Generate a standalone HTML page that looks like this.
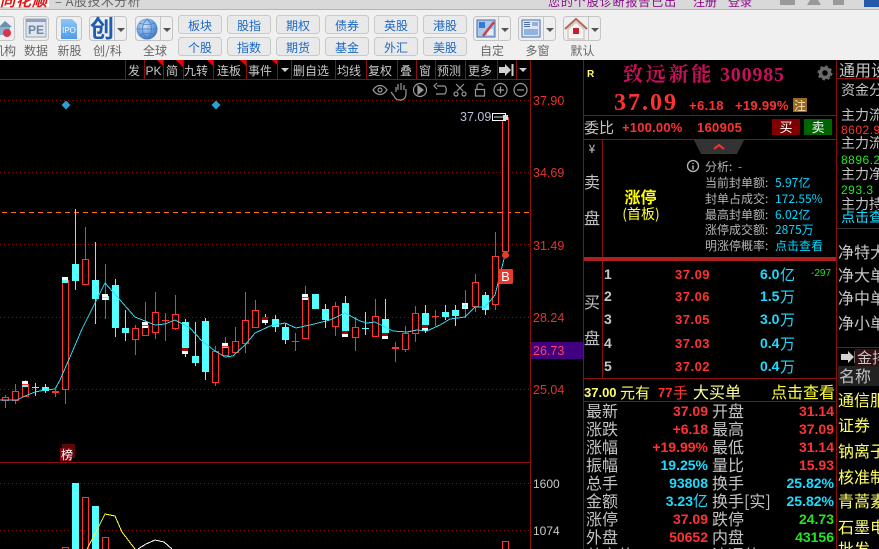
<!DOCTYPE html>
<html><head><meta charset="utf-8"><title>A股技术分析</title>
<style>
html,body{margin:0;padding:0;background:#000;overflow:hidden;width:879px;height:549px}
svg{display:block;position:absolute;left:0;top:0}
text{font-family:"WenQuanYi Zen Hei","Noto Sans CJK SC",sans-serif;font-size:14px}
.l{font-family:"Liberation Sans","WenQuanYi Zen Hei",sans-serif}
.b{font-family:"Liberation Sans","WenQuanYi Zen Hei",sans-serif;font-weight:bold;font-size:14px}
.e{text-anchor:end}.m{text-anchor:middle}
.t text{fill:#c8c8c8;font-size:12px;text-anchor:middle}
.btn rect{fill:#e9e9e9;stroke:#c9c9c9}
.btn text{fill:#1a68c4;font-size:12px;text-anchor:middle}
.lab text{fill:#666;font-size:12px;text-anchor:middle}
.ic rect.f{fill:#efefef;stroke:#c4c4c4}
.gl{fill:#c4c4c4;font-size:16px}
.row text{font-size:16px}
.tb .r{fill:#ff3333}.tb .c{fill:#1ddcff}.tb .g{fill:#22e622}
.tb .b{font-size:14px;text-anchor:end}
.y text{fill:#ffff66;font-size:16px}
.w text{fill:#c4c4c4;font-size:15px}
</style></head><body>
<svg width="879" height="549" viewBox="0 0 879 549" xmlns="http://www.w3.org/2000/svg">
<defs>
<radialGradient id="gb" cx=".4" cy=".35" r=".7"><stop offset="0" stop-color="#cfe2f8"/><stop offset=".6" stop-color="#6b9fdc"/><stop offset="1" stop-color="#3a70b8"/></radialGradient>
<linearGradient id="ip" x1="0" y1="0" x2="0" y2="1"><stop offset="0" stop-color="#8fc6f6"/><stop offset="1" stop-color="#4f9bea"/></linearGradient>
</defs>
<!-- title bar -->
<rect width="879" height="9" fill="#d9d9d9"/>
<rect y="9" width="879" height="1" fill="#b4b4b4"/>
<rect y="10" width="879" height="50" fill="#f0f0f0"/>
<rect x="0" y="0" width="49" height="7" fill="#fff"/>
<text x="0" y="6" class="b" style="font-size:15px;font-style:italic;letter-spacing:1px" fill="#e01818">同花顺</text>
<text x="55" y="6" fill="#666" style="font-size:13px;letter-spacing:.4px">– A股技术分析</text>
<text x="548" y="6" fill="#8a0a8a" style="font-size:12px;letter-spacing:.9px">您的个股诊断报告已出</text>
<text x="693" y="6" fill="#8a0a8a" style="font-size:12px">注册</text>
<text x="728" y="6" fill="#8a0a8a" style="font-size:12px">登录</text>
<rect x="780" y="0" width="15" height="5" fill="#999"/>
<path d="M807 5h14l-3-5h-8z" fill="#999"/>
<rect x="833" y="0" width="11" height="5" fill="#999"/>
<rect x="864" y="0" width="15" height="7" fill="#2458a8"/>

<!-- toolbar buttons -->
<g class="btn" shape-rendering="crispEdges">
<rect x="178.500" y="15.500" width="43" height="18" rx="3"/><rect x="178.500" y="37.500" width="43" height="18" rx="3"/>
<rect x="227.500" y="15.500" width="43" height="18" rx="3"/><rect x="227.500" y="37.500" width="43" height="18" rx="3"/>
<rect x="276.500" y="15.500" width="43" height="18" rx="3"/><rect x="276.500" y="37.500" width="43" height="18" rx="3"/>
<rect x="325.500" y="15.500" width="43" height="18" rx="3"/><rect x="325.500" y="37.500" width="43" height="18" rx="3"/>
<rect x="374.500" y="15.500" width="43" height="18" rx="3"/><rect x="374.500" y="37.500" width="43" height="18" rx="3"/>
<rect x="423.500" y="15.500" width="43" height="18" rx="3"/><rect x="423.500" y="37.500" width="43" height="18" rx="3"/>
</g>
<g class="btn">
<text x="200" y="30">板块</text><text x="200" y="52">个股</text>
<text x="249" y="30">股指</text><text x="249" y="52">指数</text>
<text x="298" y="30">期权</text><text x="298" y="52">期货</text>
<text x="347" y="30">债券</text><text x="347" y="52">基金</text>
<text x="396" y="30">英股</text><text x="396" y="52">外汇</text>
<text x="445" y="30">港股</text><text x="445" y="52">美股</text>
</g>
<!-- toolbar icons -->
<g class="ic">
<rect class="f" x="-3.500" y="16.500" width="18" height="24" rx="3"/>
<path d="M-1 27l6-6 7 6z" fill="#6a8fb0"/><rect x="0" y="27" width="10" height="8" fill="#8fb0d0"/><circle cx="7" cy="33" r="4" fill="#d8344a"/>
<rect class="f" x="23.500" y="16.500" width="25" height="24" rx="3"/>
<rect x="26" y="19" width="20" height="18" fill="#dfe5ee" stroke="#9aa6b6"/><rect x="26" y="19" width="20" height="3" fill="#8ea2c0"/>
<text x="36" y="34" class="b m" fill="#6d84a8" style="font-size:12px">PE</text>
<rect class="f" x="56.500" y="16.500" width="25" height="24" rx="3"/>
<path d="M61 19h11l5 5v15H61z" fill="url(#ip)"/>
<text x="69" y="33" class="l m" fill="#fff" style="font-size:8px">IPO</text>
<rect class="f" x="89.500" y="16.500" width="37" height="24" rx="3"/>
<path d="M114.500 17v23" stroke="#c4c4c4"/>
<text x="102" y="37" class="m" fill="#1f5db0" style="font-size:24px;font-weight:bold">创</text>
<path d="M117 28h8l-4 4z" fill="#555"/>
<rect class="f" x="135.500" y="16.500" width="37" height="24" rx="3"/>
<path d="M160.500 17v23" stroke="#c4c4c4"/>
<circle cx="147" cy="29" r="10.500" fill="url(#gb)"/>
<path d="M137 29h20M147 19c-6 6-6 14 0 20M147 19c6 6 6 14 0 20M139 23c5 2 11 2 16 0M139 35c5-2 11-2 16 0" stroke="#4a7fc4" fill="none" stroke-width=".8"/>
<path d="M163 28h8l-4 4z" fill="#555"/>
<rect class="f" x="473.500" y="16.500" width="37" height="24" rx="3"/>
<path d="M498.500 17v23" stroke="#c4c4c4"/>
<rect x="477" y="20" width="18" height="17" fill="#a8c8f0" stroke="#4a6ea8"/>
<rect x="479" y="22" width="6" height="6" fill="#3a78d0"/><rect x="487" y="29" width="6" height="6" fill="#e8eef8"/>
<path d="M483 36l11-14" stroke="#d04040" stroke-width="2.500"/>
<path d="M501 28h8l-4 4z" fill="#555"/>
<rect class="f" x="518.500" y="16.500" width="37" height="24" rx="3"/>
<path d="M543.500 17v23" stroke="#c4c4c4"/>
<rect x="522" y="20" width="18" height="17" fill="#dfe6f2" stroke="#4a6ea8"/>
<rect x="532" y="22" width="6" height="4" fill="#8fb2e0"/><rect x="524" y="29" width="14" height="6" fill="#8fb2e0"/>
<path d="M524 22.500h6M524 24.500h6M524 26.500h6" stroke="#4a6ea8"/>
<path d="M546 28h8l-4 4z" fill="#555"/>
<rect class="f" x="563.500" y="16.500" width="37" height="24" rx="3"/>
<path d="M588.500 17v23" stroke="#c4c4c4"/>
<path d="M565 29l11-10 11 10" fill="none" stroke="#b06a50" stroke-width="2"/>
<path d="M568 29v10h16V29l-8-7z" fill="#f4f4f4" stroke="#c8b8b0"/>
<rect x="573" y="28" width="6" height="6" fill="#c81e28"/>
<path d="M591 28h8l-4 4z" fill="#555"/>
</g>
<g class="lab">
<text x="4" y="55">机构</text><text x="36" y="55">数据</text><text x="69.500" y="55">新股</text><text x="107.500" y="55">创/科</text><text x="155" y="55">全球</text>
<text x="492" y="55">自定</text><text x="537.500" y="55">多窗</text><text x="582.500" y="55">默认</text>
</g>

<!-- tab bar -->
<rect y="60" width="879" height="20" fill="#000"/>
<g stroke="#8c0f0f" shape-rendering="crispEdges">
<path d="M0 79.500H530M125.500 60v19M144.500 60v19M163.500 60v19M183.500 60v19M213.500 60v19M246.500 60v19M277.500 60v19M291.500 60v19M335.500 60v19M366.500 60v19M397.500 60v19M416.500 60v19M435.500 60v19M465.500 60v19M497.500 60v19M516.500 60v19M530.500 60v20"/>
</g>
<g fill="#f00000">
<path d="M157 60h6v6zM176 60h7v7zM207 60h6v6zM240 60h6v6zM272 60h5v5z"/>
</g>
<g class="t">
<text x="134" y="75">发</text><text x="153.500" y="75" class="l" style="font-size:12px">PK</text><text x="172" y="75">简</text><text x="196" y="75">九转</text><text x="229" y="75">连板</text><text x="260" y="75">事件</text>
<text x="311" y="75">删自选</text><text x="349" y="75">均线</text><text x="380" y="75">复权</text><text x="406" y="75">叠</text><text x="425" y="75">窗</text><text x="449" y="75">预测</text><text x="480" y="75">更多</text>
</g>
<path d="M281 68h8l-4 4zM519 68h8l-4 4z" fill="#d0d0d0"/>
<path d="M499 67h6v-3l6 6-6 6v-3h-6zM511.500 64h2v12h-2z" fill="#d0d0d0"/>

<!-- chart grid -->
<g stroke="#8c0f0f" stroke-dasharray="1 3" shape-rendering="crispEdges">
<path d="M0 100.500H530M0 172.500H530M0 244.500H530M0 317.500H530M0 389.500H530M0 483.500H530M0 530.500H530"/>
</g>
<path d="M2 212.500H530" stroke="#ff6a1a" stroke-dasharray="5 4" shape-rendering="crispEdges"/>
<path d="M0 462.500H530" stroke="#8c0f0f" shape-rendering="crispEdges"/>
<path d="M530.500 80V549" stroke="#8c0f0f" shape-rendering="crispEdges"/>

<!-- tool icons -->
<g fill="none" stroke="#9a9a9a" stroke-width="1.200">
<path d="M373 90c4-6 10-6 14 0c-4 6-10 6-14 0z"/><circle cx="380" cy="90" r="2"/>
<path d="M396 92v-5m2 3v-6m3 6v-7m3 7v-5m2 4v5c0 3-2 6-5 6h-2c-3 0-4-2-5-4l-3-4"/>
<circle cx="420" cy="90" r="6.500"/><path d="M418 86l5 4-5 4z" fill="#9a9a9a"/>
<path d="M437 86h7c3 0 3 8 0 8h-8M437 83l-3 3 3 3"/>
<path d="M456 84l7 7M464 84l-7 7"/><circle cx="456" cy="94" r="2"/><circle cx="464" cy="94" r="2"/>
<rect x="475.500" y="89.500" width="9" height="6.500"/><path d="M477 89v-3c0-3 6-3 6 0"/>
<circle cx="500.500" cy="90" r="6.500"/><path d="M497 90h7M500.500 86.500v7"/>
<circle cx="520.500" cy="90" r="6.500"/><path d="M517 90h7"/>
</g>
<path d="M66 100.500l4.500 4.500-4.500 4.500-4.500-4.500zM216 100.500l4.500 4.500-4.500 4.500-4.500-4.500z" fill="#2a9fd6"/>

<!-- candles -->
<g shape-rendering="crispEdges">
<path stroke="#ff3232" fill="none" d="M5.500 395V408M15.500 384V404M25.500 380V396M55.500 389V397M65.500 280V404M85.500 227V284M105.500 264V319M135.500 325V355M145.500 302V336M155.500 292V339M165.500 313V341M175.500 295V330M215.500 346V386M225.500 337V355M235.500 327V352M245.500 292V353M255.500 300V327M295.500 333V351M305.500 286V339M335.500 302V336M355.500 317V351M375.500 299V336M395.500 342V362M405.500 326V352M415.500 306V342M435.500 310V326M465.500 290V318M475.500 274V312M495.500 232V310"/>
<path stroke="#54ffff" fill="none" d="M35.500 383V396M45.500 384V393M75.500 209V290M95.500 242V324M115.500 279V337M125.500 310V341M185.500 319V357M195.500 322V366M205.500 318V380M265.500 314V325M275.500 315V332M285.500 323V344M325.500 304V328M345.500 296V334M365.500 312V335M385.500 299V339M425.500 305V333M445.500 305V320M455.500 305V326M485.500 292V315"/>
<g fill="#000" stroke="#ff3232">
<rect x="2.500" y="397.500" width="6" height="3"/><rect x="12.500" y="391.500" width="6" height="9"/><rect x="22.500" y="384.500" width="6" height="12"/>
<rect x="62.500" y="280.500" width="6" height="109"/><rect x="82.500" y="259.500" width="6" height="25"/>
<rect x="132.500" y="328.500" width="6" height="11"/><rect x="142.500" y="325.500" width="6" height="10"/><rect x="152.500" y="312.500" width="6" height="20"/><rect x="172.500" y="314.500" width="6" height="14"/>
<rect x="212.500" y="351.500" width="6" height="31"/><rect x="222.500" y="346.500" width="6" height="9"/><rect x="232.500" y="341.500" width="6" height="11"/><rect x="242.500" y="320.500" width="6" height="23"/><rect x="252.500" y="310.500" width="6" height="17"/>
<rect x="302.500" y="297.500" width="6" height="41"/><rect x="332.500" y="306.500" width="6" height="20"/><rect x="352.500" y="327.500" width="6" height="10"/><rect x="372.500" y="316.500" width="6" height="20"/>
<rect x="402.500" y="333.500" width="6" height="16"/><rect x="412.500" y="313.500" width="6" height="20"/><rect x="472.500" y="282.500" width="6" height="24"/><rect x="492.500" y="256.500" width="6" height="48"/><rect x="502.500" y="117.500" width="6" height="134"/>
</g>
<g fill="#54ffff">
<rect x="42" y="387" width="7" height="4"/><rect x="72" y="264" width="7" height="17"/><rect x="92" y="280" width="7" height="19"/><rect x="102" y="296" width="7" height="4"/>
<rect x="112" y="285" width="7" height="43"/><rect x="122" y="328" width="7" height="5"/><rect x="182" y="322" width="7" height="26"/><rect x="192" y="356" width="7" height="7"/><rect x="202" y="321" width="7" height="51"/>
<rect x="272" y="319" width="7" height="8"/><rect x="282" y="327" width="7" height="13"/><rect x="312" y="294" width="7" height="15"/><rect x="322" y="309" width="7" height="11"/><rect x="342" y="303" width="7" height="28"/>
<rect x="382" y="319" width="7" height="14"/><rect x="422" y="313" width="7" height="12"/><rect x="442" y="312" width="7" height="5"/><rect x="452" y="310" width="7" height="6"/><rect x="482" y="295" width="7" height="15"/>
<rect x="32" y="387" width="7" height="1"/><rect x="362" y="328" width="7" height="1"/>
</g>
<g fill="#ff3232"><rect x="52" y="391" width="7" height="2"/><rect x="162" y="320" width="7" height="1"/><rect x="292" y="341" width="7" height="1"/><rect x="392" y="347" width="7" height="2"/><rect x="432" y="316" width="7" height="1"/></g>
<!-- white markers -->
<g fill="#fff"><rect x="62" y="277" width="6" height="3"/><rect x="102" y="294" width="6" height="3"/><rect x="102" y="298" width="6" height="2"/><rect x="22" y="381" width="6" height="3"/><rect x="142" y="322" width="6" height="3"/><rect x="142" y="326" width="6" height="2"/><rect x="222" y="343" width="6" height="3"/><rect x="302" y="294" width="6" height="3"/><rect x="302" y="298" width="6" height="2"/><rect x="462" y="303" width="6" height="6"/></g>
<g fill="#54ffff"><rect x="62" y="280" width="6" height="3"/><rect x="22" y="385" width="6" height="2"/><rect x="222" y="347" width="6" height="1"/><path d="M462 305.500h6v1h-6zM464.500 303h1v6h-1z"/></g>
<g fill="#a00808"><rect x="182" y="348" width="6" height="3"/><rect x="262" y="317" width="6" height="3"/><rect x="342" y="331" width="6" height="3"/><rect x="382" y="333" width="6" height="3"/><rect x="422" y="325" width="6" height="3"/></g>
<g fill="#fff"><rect x="182" y="351" width="6" height="3"/><rect x="262" y="320" width="6" height="3"/><rect x="342" y="334" width="6" height="3"/><rect x="382" y="336" width="6" height="3"/><rect x="422" y="328" width="6" height="3"/></g>
</g>
<!-- MA -->
<polyline fill="none" stroke="#2fdcf0" stroke-width="1" shape-rendering="crispEdges" points="0,400 17,400 25,396 35,392 45,390 55,389 60,380 70,357 82,329 105,283 135,317 155,325 165,324 175,320 190,328 202,341 215,351 225,357 233,356 245,345 255,333 270,326 285,323 296,328 310,325 330,320 345,313 360,321 367,323 375,322 393,331 407,332 417,330 427,331 440,325 450,319 465,317 475,307 485,307 495,295 498,283 503,263 505,255"/>
<circle cx="505.500" cy="255" r="3.500" fill="#e8392a"/>
<rect x="498" y="269" width="15" height="15" rx="1.500" fill="#e8392a"/>
<text x="505.500" y="281" class="l m" fill="#fff" style="font-size:13px">B</text>
<rect x="492.500" y="113.500" width="13" height="7" fill="#000" stroke="#fff"/><path d="M494 117h9" stroke="#ddd"/><rect x="503" y="115" width="5" height="5" fill="#ddd"/>
<text x="460" y="121" class="l" fill="#b5c4d6" style="font-size:12.500px">37.09</text>
<!-- 榜 -->
<rect x="62" y="444" width="13" height="14" fill="#5a0a0a"/><rect x="60" y="448" width="12" height="13" fill="#7a0a10"/>
<text x="61" y="459" fill="#fff" style="font-size:12px">榜</text>
<!-- axis -->
<text x="533" y="105" class="l" fill="#e63232" style="font-size:12.500px">37.90</text>
<text x="533" y="177" class="l" fill="#e63232" style="font-size:12.500px">34.69</text>
<text x="533" y="250" class="l" fill="#e63232" style="font-size:12.500px">31.49</text>
<text x="533" y="322" class="l" fill="#e63232" style="font-size:12.500px">28.24</text>
<text x="533" y="394" class="l" fill="#e63232" style="font-size:12.500px">25.04</text>
<rect x="531" y="342" width="52" height="17" fill="#40007f"/>
<text x="533" y="355" class="l" fill="#ff4060" style="font-size:12.500px">26.73</text>
<text x="533" y="488" class="l" fill="#c8c8c8" style="font-size:12px">1600</text>
<text x="533" y="535" class="l" fill="#c8c8c8" style="font-size:12px">1074</text>
<!-- volume -->
<g shape-rendering="crispEdges">
<rect x="72" y="483" width="7" height="66" fill="#54ffff"/><rect x="92" y="506" width="7" height="43" fill="#54ffff"/>
<g fill="none" stroke="#ff3232"><rect x="82.500" y="497.500" width="6" height="60"/><rect x="102.500" y="537.500" width="6" height="30"/><rect x="62.500" y="547.500" width="6" height="20"/><rect x="502.500" y="541.500" width="6" height="30"/></g>
</g>
<polyline fill="none" stroke="#ffff33" shape-rendering="crispEdges" points="87,549 97,530 105,514 115,516 122,532 135,549"/>
<polyline fill="none" stroke="#fff" shape-rendering="crispEdges" points="138,549 146,544 155,540 164,542 172,549"/>

<!-- right panel -->
<g stroke="#8c0f0f" shape-rendering="crispEdges" fill="none">
<path d="M583.500 60V549M836.500 60V549M584 115.500H836M584 139.500H836M602.500 139V378M584 378.500H836M584 401.500H836M837 78.500H879M837 347.500H879"/>
</g>
<path d="M837 228.500H879" stroke="#333"/>
<text x="587" y="77" class="b" fill="#ffff66" style="font-size:10px">R</text>
<text x="623" y="81" fill="#c8105a" style="font-family:'Noto Serif CJK SC','Liberation Serif',serif;font-weight:bold;font-size:20px;letter-spacing:2.800px">致远新能</text>
<text x="720" y="81" fill="#c8105a" style="font-family:'Liberation Serif',serif;font-weight:bold;font-size:20px;letter-spacing:.800px">300985</text>
<circle cx="825" cy="73" r="4.500" fill="none" stroke="#6a6a6a" stroke-width="3.500"/>
<circle cx="825" cy="73" r="6.500" fill="none" stroke="#6a6a6a" stroke-width="2" stroke-dasharray="2.500 2.600"/>
<text x="614" y="110" fill="#ff3232" style="font-family:'Liberation Serif',serif;font-weight:bold;font-size:24px;letter-spacing:2px">37.09</text>
<text x="689" y="110" class="b" fill="#ff3232" style="font-size:13px;letter-spacing:.4px">+6.18</text>
<text x="735" y="110" class="b" fill="#ff3232" style="font-size:13px;letter-spacing:.3px">+19.99%</text>
<rect x="793" y="98" width="14" height="14" fill="#9a6a20"/>
<text x="794" y="110" fill="#f0e0b0" style="font-size:12px">注</text>
<text x="584" y="133" class="gl" style="font-size:15px">委比</text>
<text x="622" y="132" class="b" fill="#ff3232" style="font-size:13px;letter-spacing:.2px">+100.00%</text>
<text x="697" y="132" class="b" fill="#ff3232" style="font-size:13px;letter-spacing:.3px">160905</text>
<rect x="772" y="119" width="28" height="16" fill="#800000"/><rect x="804" y="119" width="28" height="16" fill="#006400"/>
<text x="786" y="132" class="m" fill="#fff" style="font-size:13px">买</text><text x="818" y="132" class="m" fill="#fff" style="font-size:13px">卖</text>

<text x="592" y="153" class="m" fill="#c4c4c4" style="font-size:12px">¥</text>
<text x="592" y="188" class="gl m">卖</text><text x="592" y="224" class="gl m">盘</text>
<path d="M694 140h50l-7 14h-36z" fill="#333"/>
<path d="M714 149l5-4 5 4" fill="none" stroke="#ff3232" stroke-width="2"/>
<circle cx="693" cy="166" r="5.500" fill="none" stroke="#b8b8b8" stroke-width="1.300"/>
<path d="M693 163v1M693 165.500v4" stroke="#b8b8b8" stroke-width="1.500"/>
<g fill="#b4b4b4">
<text x="705" y="171" style="font-size:12px">分析:</text><text x="738" y="171" fill="#00d8ff" style="font-size:12px">-</text>
<text x="705" y="187" style="font-size:12px">当前封单额:</text>
<text x="705" y="203" style="font-size:12px">封单占成交:</text>
<text x="705" y="219" style="font-size:12px">最高封单额:</text>
<text x="705" y="234" style="font-size:12px">涨停成交额:</text>
<text x="705" y="250" style="font-size:12px">明涨停概率:</text>
</g>
<g fill="#00d8ff">
<text x="775" y="187" style="font-size:12px">5.97亿</text>
<text x="775" y="203" style="font-size:12px">172.55%</text>
<text x="775" y="219" style="font-size:12px">6.02亿</text>
<text x="775" y="234" style="font-size:12px">2875万</text>
<text x="775" y="250" style="font-size:12px">点击查看</text>
</g>
<text x="640.500" y="203" class="m" fill="#ffff00" style="font-size:16px;font-weight:bold">涨停</text>
<text x="641" y="219" class="m" fill="#ffff33" style="font-size:14px">(首板)</text>
<rect x="584" y="257" width="252" height="4" fill="#b02020"/>

<text x="604" y="279" class="b" fill="#c8c8c8">1</text><text x="604" y="301" class="b" fill="#c8c8c8">2</text><text x="604" y="324" class="b" fill="#c8c8c8">3</text><text x="604" y="348" class="b" fill="#c8c8c8">4</text><text x="604" y="371" class="b" fill="#c8c8c8">5</text>
<text x="675" y="279" class="b" fill="#ff3232" style="font-size:13px;letter-spacing:.500px">37.09</text>
<text x="675" y="301" class="b" fill="#ff3232" style="font-size:13px;letter-spacing:.500px">37.06</text>
<text x="675" y="324" class="b" fill="#ff3232" style="font-size:13px;letter-spacing:.500px">37.05</text>
<text x="675" y="348" class="b" fill="#ff3232" style="font-size:13px;letter-spacing:.500px">37.03</text>
<text x="675" y="371" class="b" fill="#ff3232" style="font-size:13px;letter-spacing:.500px">37.02</text>
<text x="760" y="279" class="b" fill="#1ddcff">6.0</text><text x="780" y="280" fill="#1ddcff" style="font-size:15px">亿</text>
<text x="760" y="301" class="b" fill="#1ddcff">1.5</text><text x="780" y="302" fill="#1ddcff" style="font-size:15px">万</text>
<text x="760" y="324" class="b" fill="#1ddcff">3.0</text><text x="780" y="325" fill="#1ddcff" style="font-size:15px">万</text>
<text x="760" y="348" class="b" fill="#1ddcff">0.4</text><text x="780" y="349" fill="#1ddcff" style="font-size:15px">万</text>
<text x="760" y="371" class="b" fill="#1ddcff">0.4</text><text x="780" y="372" fill="#1ddcff" style="font-size:15px">万</text>
<text x="811" y="276" class="l" fill="#22e622" style="font-size:10px">-297</text>
<text x="592" y="308" class="gl m">买</text><text x="592" y="344" class="gl m">盘</text>

<text x="584" y="397" class="b" fill="#ffff66" style="font-size:13px">37.00</text>
<text x="620" y="398" fill="#ffff66" style="font-size:15px">元有</text>
<text x="658" y="397" class="b" fill="#ff3232" style="font-size:13px">77</text>
<text x="673" y="398" fill="#ff3232" style="font-size:15px">手</text>
<text x="693" y="398" fill="#ffff99" style="font-size:16px">大买单</text>
<text x="771" y="398" fill="#ffff33" style="font-size:16px">点击查看</text>

<g class="tb">
<text x="586" y="417" class="gl">最新</text><text x="586" y="435" class="gl">涨跌</text><text x="586" y="453" class="gl">涨幅</text><text x="586" y="471" class="gl">振幅</text><text x="586" y="489" class="gl">总手</text><text x="586" y="507" class="gl">金额</text><text x="586" y="525" class="gl">涨停</text><text x="586" y="543" class="gl">外盘</text>
<text x="712" y="417" class="gl">开盘</text><text x="712" y="435" class="gl">最高</text><text x="712" y="453" class="gl">最低</text><text x="712" y="471" class="gl">量比</text><text x="712" y="489" class="gl">换手</text><text x="712" y="507" class="gl">换手[实]</text><text x="712" y="525" class="gl">跌停</text><text x="712" y="543" class="gl">内盘</text>
<text x="586" y="561" class="gl">总市值</text><text x="712" y="561" class="gl">流通值</text>
<text x="708" y="416" class="b r">37.09</text><text x="708" y="434" class="b r">+6.18</text><text x="708" y="452" class="b r">+19.99%</text><text x="708" y="470" class="b c">19.25%</text><text x="708" y="488" class="b c">93808</text>
<text x="708" y="506" class="b c">3.23<tspan style="font-family:'WenQuanYi Zen Hei';font-weight:normal;font-size:15px">亿</tspan></text>
<text x="708" y="524" class="b r">37.09</text><text x="708" y="542" class="b r">50652</text>
<text x="834" y="416" class="b r">31.14</text><text x="834" y="434" class="b r">37.09</text><text x="834" y="452" class="b r">31.14</text><text x="834" y="470" class="b r">15.93</text><text x="834" y="488" class="b c">25.82%</text><text x="834" y="506" class="b c">25.82%</text><text x="834" y="524" class="b g">24.73</text><text x="834" y="542" class="b g">43156</text>
</g>

<!-- far right column -->
<text x="839" y="76" fill="#c8c8c8" style="font-size:16px">通用设</text>
<g class="w">
<text x="841" y="95" style="font-size:14px">资金分布</text>
<text x="841" y="120" style="font-size:14px">主力流入</text>
<text x="841" y="148" style="font-size:14px">主力流出</text>
<text x="841" y="179" style="font-size:14px">主力净额</text>
<text x="841" y="209" style="font-size:14px">主力持仓</text>
</g>
<text x="841" y="134" class="l" fill="#ff3232" style="font-size:12px;letter-spacing:.500px">8602.9</text>
<text x="841" y="164" class="l" fill="#22e622" style="font-size:12px;letter-spacing:.500px">8896.2</text>
<text x="841" y="194" class="l" fill="#22e622" style="font-size:12px;letter-spacing:.500px">293.3</text>
<text x="841" y="222" fill="#1ddcff" style="font-size:14px">点击查看</text>
<text x="838" y="258" class="gl">净特大单</text><text x="838" y="281" class="gl">净大单</text><text x="838" y="304" class="gl">净中单</text><text x="838" y="329" class="gl">净小单</text>
<path d="M841 354h7v-3l6 6-6 6v-3h-7zM854.500 351h2v12h-2z" fill="#d0d0d0"/>
<rect x="855" y="349" width="24" height="17" fill="#301010"/>
<text x="857" y="363" fill="#c8c8c8" style="font-size:15px">金排</text>
<rect x="838" y="366" width="41" height="20" fill="#222"/>
<text x="839" y="382" class="gl">名称</text>
<g class="y">
<text x="838" y="406">通信服务</text><text x="838" y="431">证券</text><text x="838" y="457">钠离子</text><text x="838" y="483">核准制</text><text x="838" y="507">青蒿素</text><text x="838" y="533">石墨电</text><text x="838" y="555">批发</text>
</g>
</svg>
</body></html>
